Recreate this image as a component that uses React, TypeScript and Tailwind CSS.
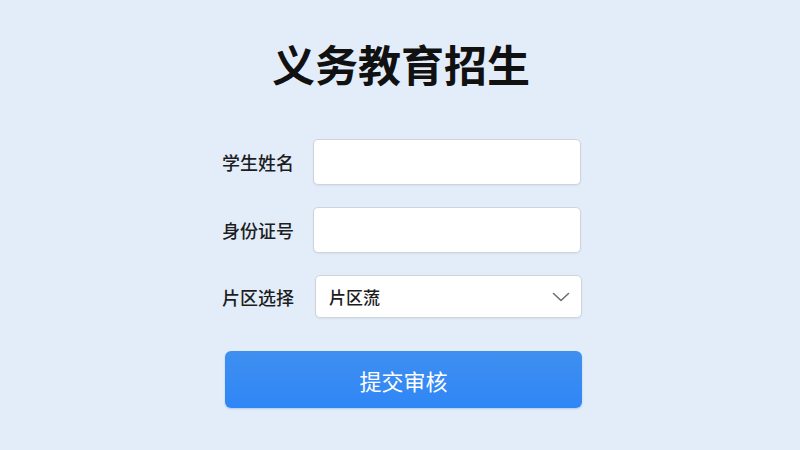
import React from "react";

const font = { fontFamily: '"Noto Sans CJK SC", "Noto Sans", sans-serif' };

function Field({ label, children }: { label: string; children: React.ReactNode }) {
  return (
    <div className="flex items-center">
      <div className="w-[73px] text-[18px] leading-none font-medium text-[#1d1d1f]">{label}</div>
      <div className="ml-[18px] flex-1">{children}</div>
    </div>
  );
}

export default function App() {
  return (
    <div
      className="w-[800px] h-[450px] bg-[#e3edfa] flex flex-col items-center overflow-hidden"
      style={font}
    >
      <h1 className="mt-[39px] ml-[2px] text-[43px] leading-[48px] font-bold text-[#111111]">
        义务教育招生
      </h1>
      <form className="mt-[52px] w-[360px] ml-[4px] flex flex-col" onSubmit={(e) => e.preventDefault()}>
        <Field label="学生姓名">
          <input
            className="block w-[268px] h-[46px] rounded-[5px] border border-[#cdd4dc] bg-white shadow-[0_1px_2px_rgba(0,0,0,0.06)] outline-none"
            type="text"
          />
        </Field>
        <div className="h-[22px]" />
        <Field label="身份证号">
          <input
            className="block w-[268px] h-[46px] rounded-[5px] border border-[#cdd4dc] bg-white shadow-[0_1px_2px_rgba(0,0,0,0.06)] outline-none"
            type="text"
          />
        </Field>
        <div className="h-[22px]" />
        <Field label="片区选择">
          <div className="ml-[2px] w-[267px] h-[43px] rounded-[5px] border border-[#cdd4dc] bg-white shadow-[0_1px_2px_rgba(0,0,0,0.06)] flex items-center justify-between pl-[13px] pr-[11px]">
            <span className="text-[17px] leading-none font-medium text-[#1d1d1f]">片区蓅</span>
            <svg width="18" height="10" viewBox="0 0 18 10" fill="none">
              <path d="M1.5 1.5 L9 8.5 L16.5 1.5" stroke="#6b6f75" strokeWidth="1.6" strokeLinecap="round" strokeLinejoin="round" />
            </svg>
          </div>
        </Field>
        <button
          type="submit"
          className="mt-[33px] ml-[3px] w-[357px] h-[57px] rounded-[6px] bg-gradient-to-b from-[#3f8ff0] to-[#2f86f6] text-white text-[22px] leading-none shadow-[0_1px_2px_rgba(30,90,180,0.25)]"
        >
          提交审核
        </button>
      </form>
    </div>
  );
}
